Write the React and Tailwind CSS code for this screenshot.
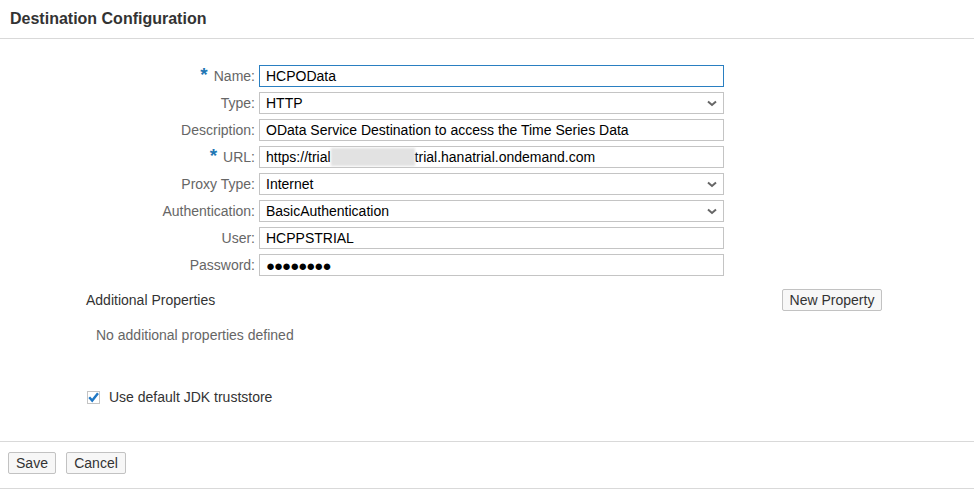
import React from 'react';

function Chevron() {
    return (
        <svg width="10" height="7" viewBox="0 0 10 7" className="mr-[6px]">
            <path d="M1 1.5 L5 5 L9 1.5" fill="none" stroke="#666" strokeWidth="2" />
        </svg>
    );
}

function Field({ label, required, children, select, focused }) {
    return (
        <div className="flex items-center h-[22px]">
            <div className="w-[255px] text-right text-[14px] text-[#666] leading-none flex items-center justify-end">
                {required && (
                    <span className="text-[#1f77b4] font-bold mr-[6px] text-[19px] leading-none -mt-[3px]">*</span>
                )}
                <span>{label}:</span>
            </div>
            <div
                className={
                    'ml-[4px] w-[465px] h-[22px] flex items-center justify-between bg-white border ' +
                    (focused ? 'border-[#2a7fc1]' : 'border-[#c4c4c4]')
                }
            >
                <div className="pl-[6px] text-[14px] text-black leading-none flex items-center whitespace-nowrap">
                    {children}
                </div>
                {select && <Chevron />}
            </div>
        </div>
    );
}

function Button({ children, className = '' }) {
    return (
        <button
            className={
                'h-[22px] bg-[#f7f7f7] border border-[#c2c2c2] rounded-[2px] text-[14px] text-[#333] leading-none ' +
                className
            }
        >
            {children}
        </button>
    );
}

export default function App() {
    return (
        <div className="w-[974px] h-[491px] bg-white font-['Liberation_Sans',Arial,sans-serif] text-[#333]">
            {/* Header */}
            <div className="h-[39px] flex items-center px-[10px] border-b border-[#d9d9d9]">
                <h1 className="text-[16px] font-bold text-[#333] -mt-[1px]">Destination Configuration</h1>
            </div>

            {/* Form */}
            <div className="pt-[26px] flex flex-col gap-[5px]">
                <Field label="Name" required focused>HCPOData</Field>
                <Field label="Type" select>HTTP</Field>
                <Field label="Description">OData Service Destination to access the Time Series Data</Field>
                <Field label="URL" required>
                    https://trial
                    <span className="inline-block w-[84px] h-[18px] bg-[#e2e2e2] blur-[1px]"></span>
                    trial.hanatrial.ondemand.com
                </Field>
                <Field label="Proxy Type" select>Internet</Field>
                <Field label="Authentication" select>BasicAuthentication</Field>
                <Field label="User">HCPPSTRIAL</Field>
                <Field label="Password">
                    <span className="text-[15px] tracking-[-1px]">●●●●●●●●</span>
                </Field>
            </div>

            {/* Additional properties */}
            <div className="ml-[86px] w-[796px] mt-[13px] flex items-center justify-between h-[22px]">
                <span className="text-[14px] text-[#333]">Additional Properties</span>
                <Button className="w-[100px]">New Property</Button>
            </div>
            <div className="ml-[96px] mt-[16px] h-[16px] flex items-center text-[14px] text-[#666]">
                No additional properties defined
            </div>

            <div className="ml-[87px] mt-[46px] h-[16px] flex items-center gap-[9px]">
                <div className="w-[13px] h-[13px] border border-[#c4c4c4] bg-white flex items-center justify-center">
                    <svg width="11" height="11" viewBox="0 0 11 11">
                        <path d="M1.2 5.2 L4.2 8.6 L10 1.2" fill="none" stroke="#1f77c4" strokeWidth="2.4" />
                    </svg>
                </div>
                <span className="text-[14px] text-[#333]">Use default JDK truststore</span>
            </div>

            {/* Footer */}
            <div className="mt-[36px] border-t border-b border-[#d9d9d9] pt-[10px] pb-[14px] px-[8px] flex gap-[10px]">
                <Button className="w-[48px]">Save</Button>
                <Button className="w-[60px]">Cancel</Button>
            </div>
        </div>
    );
}
